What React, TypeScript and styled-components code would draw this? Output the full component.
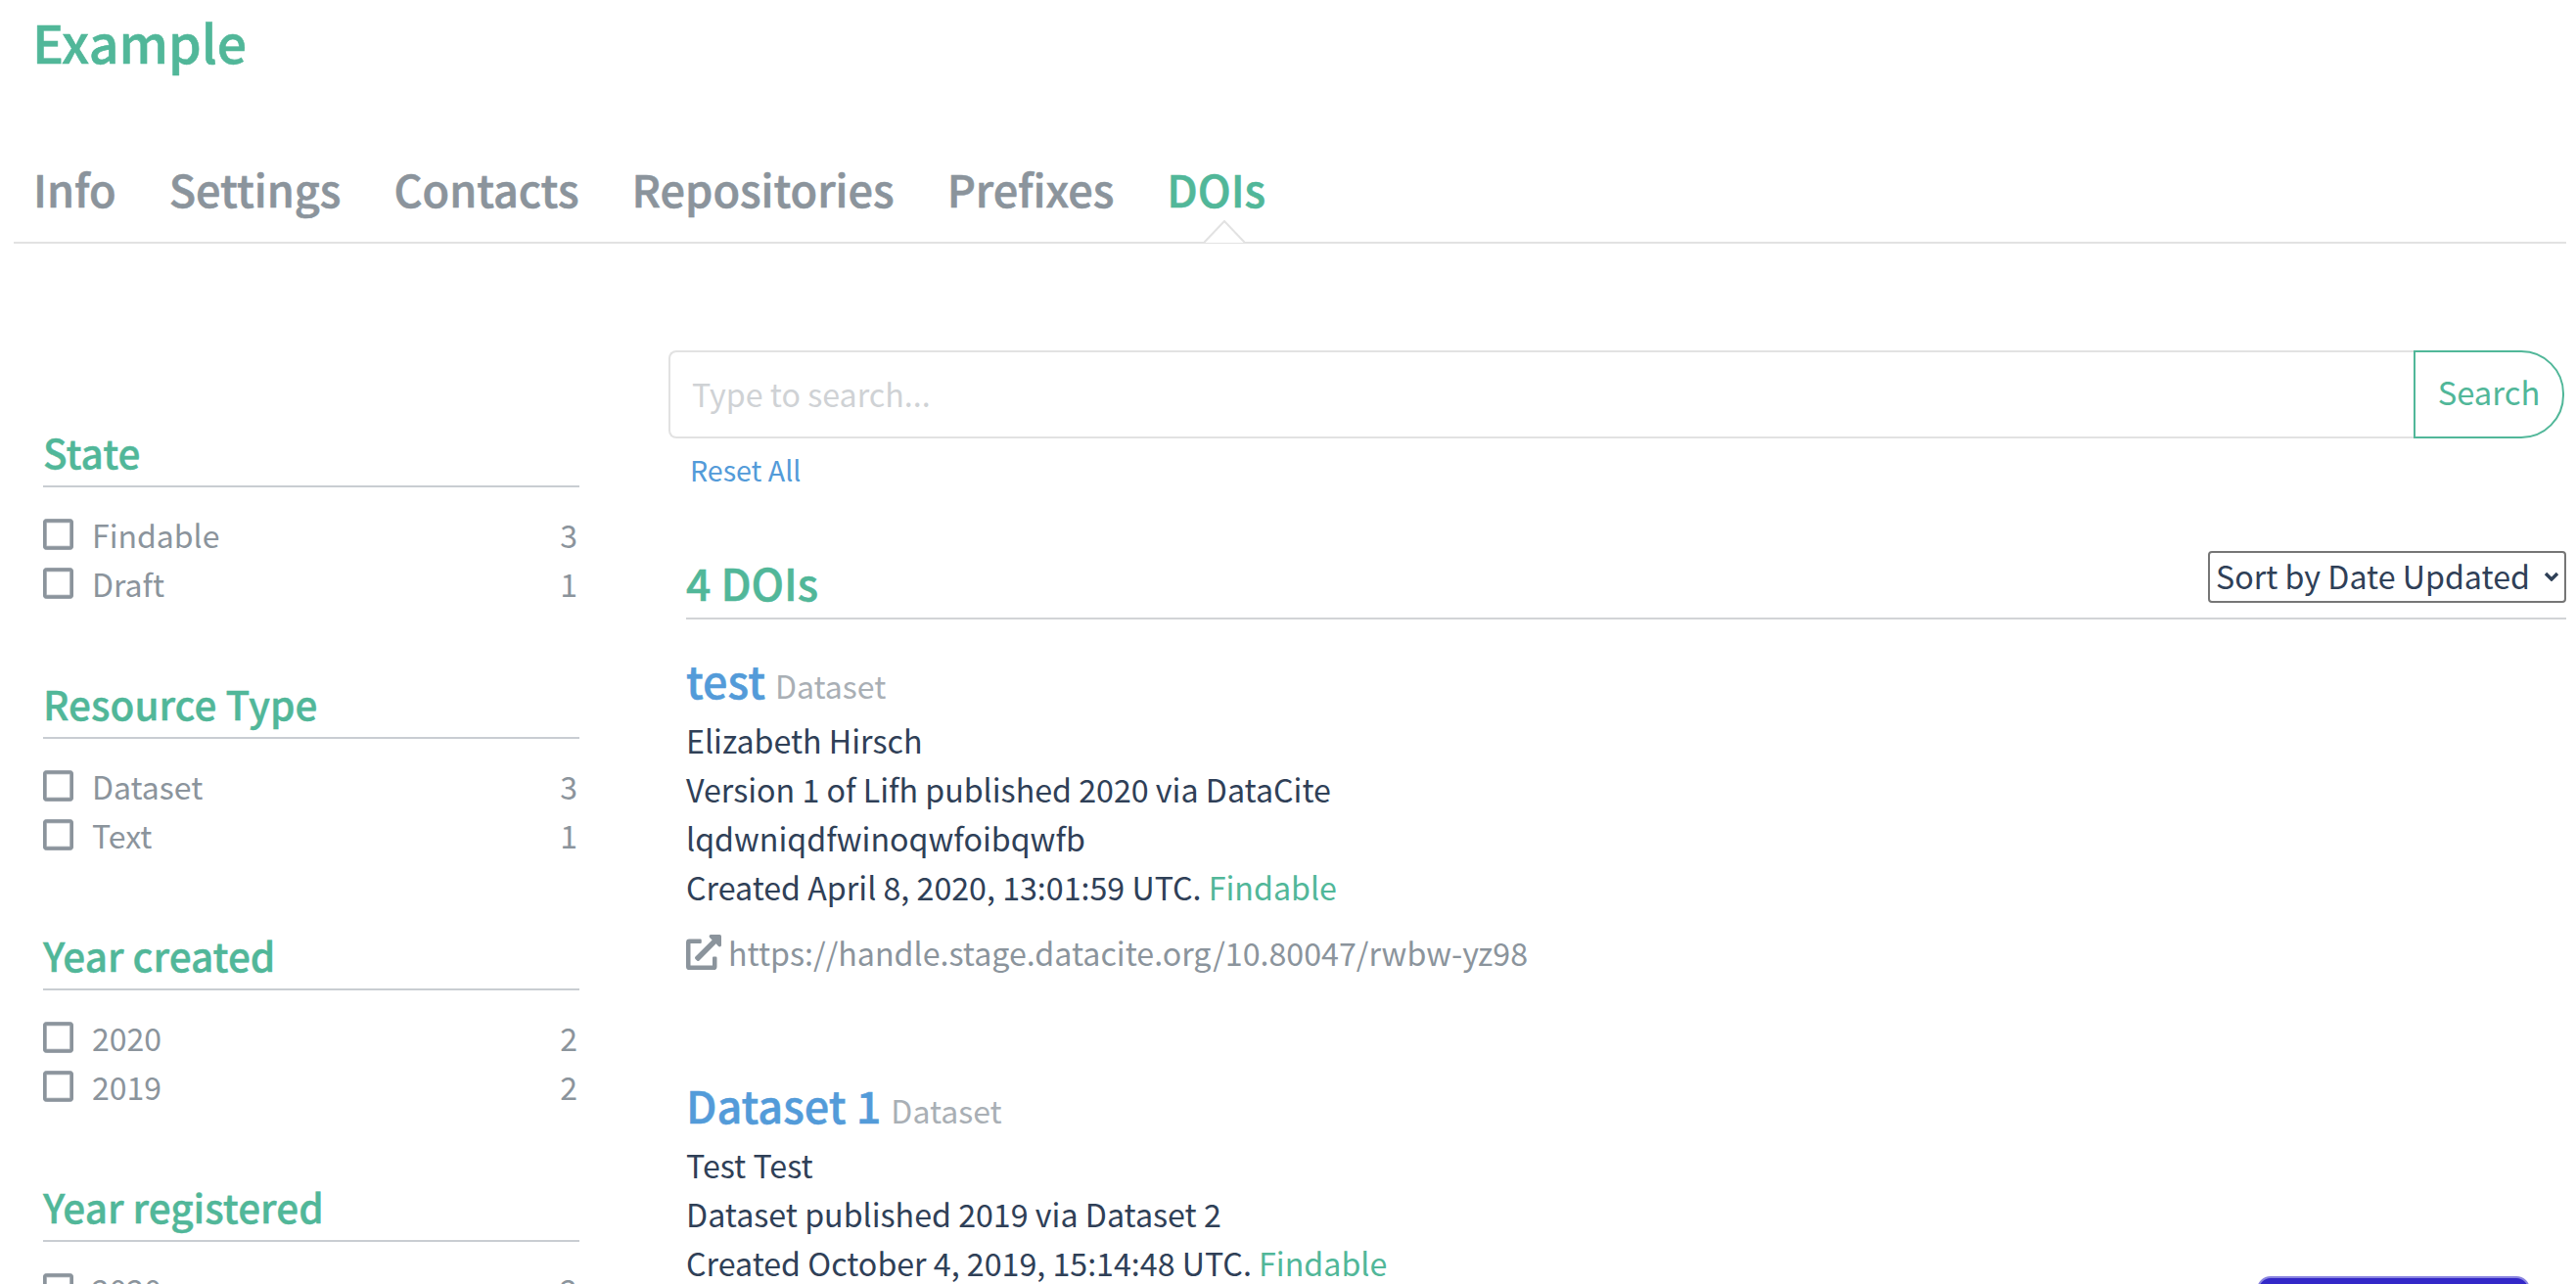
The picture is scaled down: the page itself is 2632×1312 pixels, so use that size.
import React from "react";
import styled, { createGlobalStyle } from "styled-components";
import { FaExternalLinkAlt, FaRegSquare } from "react-icons/fa";

const green = "#51b799";
const blue = "#539bd9";
const gray = "#8b949c";
const ink = "#2f4057";
const chevron =
  "data:image/svg+xml," +
  encodeURIComponent(
    '<svg xmlns="http://www.w3.org/2000/svg" viewBox="0 0 16 10"><path d="M2 2l6 6 6-6" fill="none" stroke="#2f4057" stroke-width="3.4"/></svg>'
  );

const Global = createGlobalStyle`
  html, body { margin: 0; padding: 0; height: 100%; overflow: hidden; background: #fff; }
  body { font-family: "Noto Sans CJK SC", "Noto Sans", sans-serif; font-size: 32.2px; line-height: 50px; color: ${ink}; }
`;

const Page = styled.div`
  padding: 0 10px 0 14px;
  height: 1312px;
  overflow: hidden;
`;
const Title = styled.h1`
  margin: 0;
  padding: 12px 0 0 19px;
  height: 120px;
  box-sizing: border-box;
  font-size: 53.6px;
  line-height: 60px;
  font-weight: 500;
  -webkit-text-stroke: 0.6px ${green};
  color: ${green};
`;
const Tabs = styled.nav`
  position: relative;
  display: flex;
  gap: 54px;
  height: 129px;
  box-sizing: border-box;
  padding: 45px 0 0 20px;
  border-bottom: 2px solid #e2e2e2;
`;
const Tab = styled.a<{ $active?: boolean }>`
  font-size: 45px;
  line-height: 56px;
  font-weight: 500;
  color: ${(p) => (p.$active ? green : gray)};
  -webkit-text-stroke: 0.6px ${(p) => (p.$active ? green : gray)};
`;
const Notch = styled.svg`
  position: absolute;
  left: 1216px;
  bottom: -2px;
  width: 42px;
  height: 24px;
`;
const Layout = styled.div`
  display: grid;
  grid-template-columns: 548px 1fr;
  column-gap: 91px;
  padding: 109px 0 0 30px;
`;
const Sidebar = styled.aside`
  padding-top: 77px;
`;
const Facet = styled.section`
  margin-bottom: 71px;
`;
const FacetTitle = styled.h2`
  margin: 0 0 23px;
  height: 61px;
  font-size: 40.5px;
  line-height: 54px;
  font-weight: 500;
  color: ${green};
  -webkit-text-stroke: 0.4px ${green};
  border-bottom: 2px solid #c9cdd2;
`;
const FacetRow = styled.div`
  display: flex;
  align-items: center;
  height: 50px;
  color: ${gray};
  font-size: 32px;
`;
const Box = styled(FaRegSquare)`
  width: 31px;
  height: 36px;
  margin-right: 19px;
  color: ${gray};
  stroke: ${gray};
  stroke-width: 10;
`;
const Count = styled.span`
  margin-left: auto;
  margin-right: 2px;
`;
const Main = styled.main``;
const SearchBar = styled.div`
  display: flex;
  height: 90px;
  margin-right: 2px;
`;
const SearchInput = styled.input`
  flex: 1;
  min-width: 0;
  box-sizing: border-box;
  height: 90px;
  padding: 0 22px 3px;
  border: 2px solid #e2e2e2;
  border-right: none;
  border-radius: 8px 0 0 8px;
  font: 32.2px "Noto Sans CJK SC", sans-serif;
  color: ${ink};
  outline: none;
  &::placeholder { color: #cfd2d5; }
`;
const SearchButton = styled.button`
  width: 154px;
  height: 90px;
  box-sizing: border-box;
  padding: 0 0 8px;
  border: 2px solid ${green};
  border-radius: 0 44px 44px 0;
  background: #fff;
  color: ${green};
  font: 32.8px "Noto Sans CJK SC", sans-serif;
`;
const Results = styled.div`
  padding-left: 18px;
`;
const Reset = styled.a`
  display: block;
  margin: 7px 0 0 4px;
  color: ${blue};
  font-size: 28.6px;
  line-height: 50px;
`;
const ResultsHead = styled.div`
  display: flex;
  align-items: center;
  justify-content: space-between;
  margin-top: 56px;
  height: 70px;
  border-bottom: 2px solid #d2d4d6;
`;
const Count4 = styled.h3`
  margin: 0;
  padding-bottom: 2px;
  font-size: 44.5px;
  line-height: 60px;
  font-weight: 500;
  color: ${green};
  -webkit-text-stroke: 0.5px ${green};
`;
const Sort = styled.select`
  appearance: none;
  width: 366px;
  height: 53px;
  margin: 0 0 14px;
  padding: 0 0 3px 6px;
  font: 32.2px "Noto Sans CJK SC", sans-serif;
  color: ${ink};
  background: #fff url("${chevron}") no-repeat right 5px center / 16px 10px;
  border: 2px solid #767676;
  border-radius: 4px;
`;
const Result = styled.article`
  margin-bottom: 94px;
  &:first-of-type { padding-top: 25px; }
`;
const ResultHead = styled.div`
  height: 73px;
  line-height: 73px;
`;
const ResultTitle = styled.a`
  font-size: 45px;
  font-weight: 500;
  color: ${blue};
  -webkit-text-stroke: 0.5px ${blue};
  margin-right: 10px;
`;
const Tag = styled.span`
  font-size: 32px;
  color: #a9afb5;
`;
const Line = styled.div``;
const State = styled.span`
  color: ${green};
`;
const Url = styled.div`
  display: flex;
  align-items: center;
  margin-top: 17px;
  color: ${gray};
`;
const UrlIcon = styled(FaExternalLinkAlt)`
  width: 36px;
  height: 36px;
  margin-right: 7px;
`;
const Support = styled.div`
  position: fixed;
  left: 2306px;
  top: 1304px;
  width: 279px;
  height: 60px;
  background: #3328c8;
  border: 2px solid #8a84e0;
  box-sizing: border-box;
  border-radius: 14px;
`;

const facets = [
  { name: "State", items: [["Findable", 3], ["Draft", 1]] },
  { name: "Resource Type", items: [["Dataset", 3], ["Text", 1]] },
  { name: "Year created", items: [["2020", 2], ["2019", 2]] },
  { name: "Year registered", items: [["2020", 2], ["2019", 1]] },
];

export default function App() {
  return (
    <Page>
      <Global />
      <Title>Example</Title>
      <Tabs>
        {["Info", "Settings", "Contacts", "Repositories", "Prefixes"].map((t) => (
          <Tab key={t}>{t}</Tab>
        ))}
        <Tab $active>DOIs</Tab>
        <Notch viewBox="0 0 42 24">
          <path d="M0 23 L21 1 L42 23" fill="#fff" stroke="#e2e2e2" strokeWidth="2" />
        </Notch>
      </Tabs>
      <Layout>
        <Sidebar>
          {facets.map((f) => (
            <Facet key={f.name}>
              <FacetTitle>{f.name}</FacetTitle>
              {f.items.map(([n, c]) => (
                <FacetRow key={String(n)}>
                  <Box />
                  {n}
                  <Count>{c}</Count>
                </FacetRow>
              ))}
            </Facet>
          ))}
        </Sidebar>
        <Main>
          <SearchBar>
            <SearchInput placeholder="Type to search..." />
            <SearchButton>Search</SearchButton>
          </SearchBar>
          <Results>
            <Reset>Reset All</Reset>
            <ResultsHead>
              <Count4>4 DOIs</Count4>
              <Sort defaultValue="u">
                <option value="u">Sort by Date Updated</option>
              </Sort>
            </ResultsHead>
            <Result>
              <ResultHead>
                <ResultTitle>test</ResultTitle>
                <Tag>Dataset</Tag>
              </ResultHead>
              <Line>Elizabeth Hirsch</Line>
              <Line>Version 1 of Lifh published 2020 via DataCite</Line>
              <Line>lqdwniqdfwinoqwfoibqwfb</Line>
              <Line>
                Created April 8, 2020, 13:01:59 UTC. <State>Findable</State>
              </Line>
              <Url>
                <UrlIcon />
                https://handle.stage.datacite.org/10.80047/rwbw-yz98
              </Url>
            </Result>
            <Result>
              <ResultHead>
                <ResultTitle>Dataset 1</ResultTitle>
                <Tag>Dataset</Tag>
              </ResultHead>
              <Line>Test Test</Line>
              <Line>Dataset published 2019 via Dataset 2</Line>
              <Line>
                Created October 4, 2019, 15:14:48 UTC. <State>Findable</State>
              </Line>
            </Result>
          </Results>
        </Main>
      </Layout>
      <Support />
    </Page>
  );
}
